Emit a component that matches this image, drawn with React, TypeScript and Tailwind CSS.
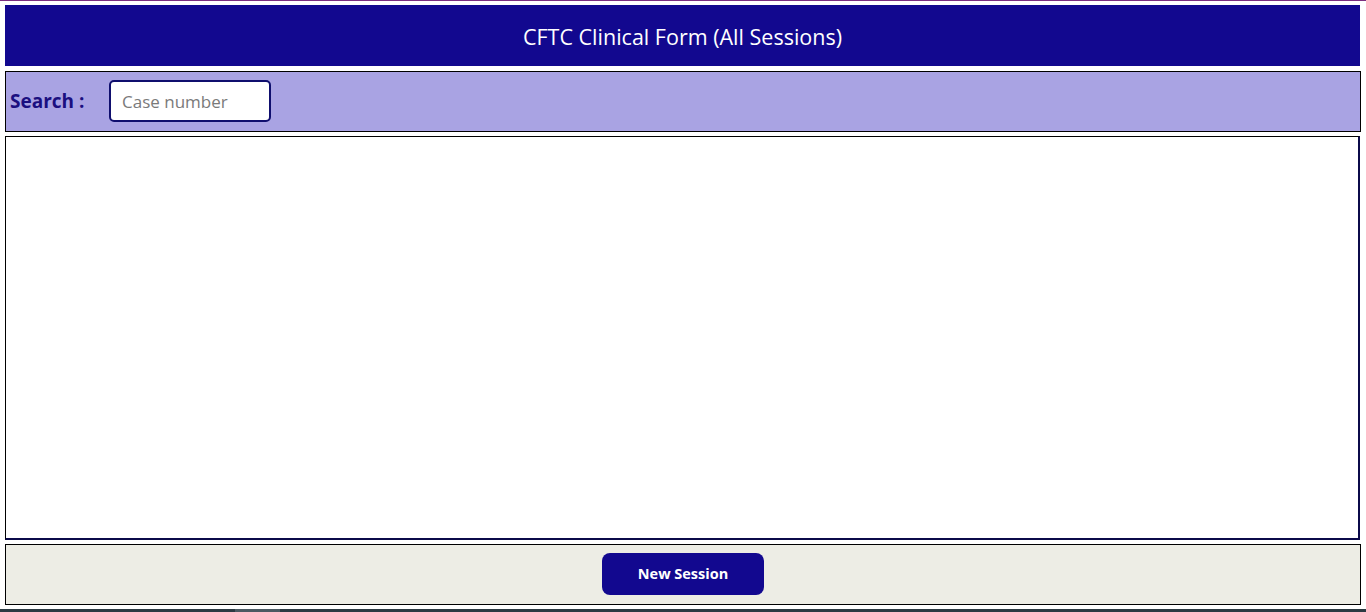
import React from "react";

export default function App() {
  return (
    <div
      className="w-[1366px] h-[612px] bg-white flex flex-col overflow-hidden"
      style={{ fontFamily: '"Open Sans", "Noto Sans", sans-serif' }}
    >
      <div className="h-[1px] bg-[#7b2d7f] shrink-0" />
      <header className="mt-[4px] ml-[5px] w-[1355px] h-[61px] bg-[#12088f] flex items-center justify-center shrink-0">
        <h1 className="text-white text-[21.5px] leading-none pt-[3px]">CFTC Clinical Form (All Sessions)</h1>
      </header>

      <div className="mt-[5px] ml-[5px] w-[1356px] h-[61px] bg-[#a9a3e3] border border-black flex items-center shrink-0">
        <label className="ml-[4px] w-[99px] text-[19px] font-bold text-[#1b0f80]">Search :</label>
        <input
          type="text"
          placeholder="Case number"
          className="w-[162px] h-[42px] -mt-[1px] bg-white border-2 border-[#0f0e6e] rounded-[5px] px-[11px] text-[17px] text-gray-800 placeholder:text-[#7a7a7a] outline-none"
        />
      </div>

      <main className="mt-[4px] ml-[5px] w-[1355px] h-[404px] bg-white border-l border-t border-black border-r-2 border-r-[#0b0a4a] border-b-2 border-b-[#0b0a4a] shrink-0" />

      <footer className="mt-[4px] ml-[5px] w-[1356px] h-[61px] bg-[#edede5] border border-black flex items-center justify-center shrink-0">
        <button className="w-[162px] h-[42px] -mt-[1px] bg-[#12088f] rounded-[8px] text-white text-[14.5px] font-bold">
          New Session
        </button>
      </footer>

      <div className="mt-[4px] h-[3px] flex shrink-0">
        <div className="w-[235px] bg-[#2b3a42]" />
        <div className="w-[45px] bg-[#4b5a62]" />
        <div className="flex-1 bg-[#2b3a42]" />
      </div>
    </div>
  );
}
